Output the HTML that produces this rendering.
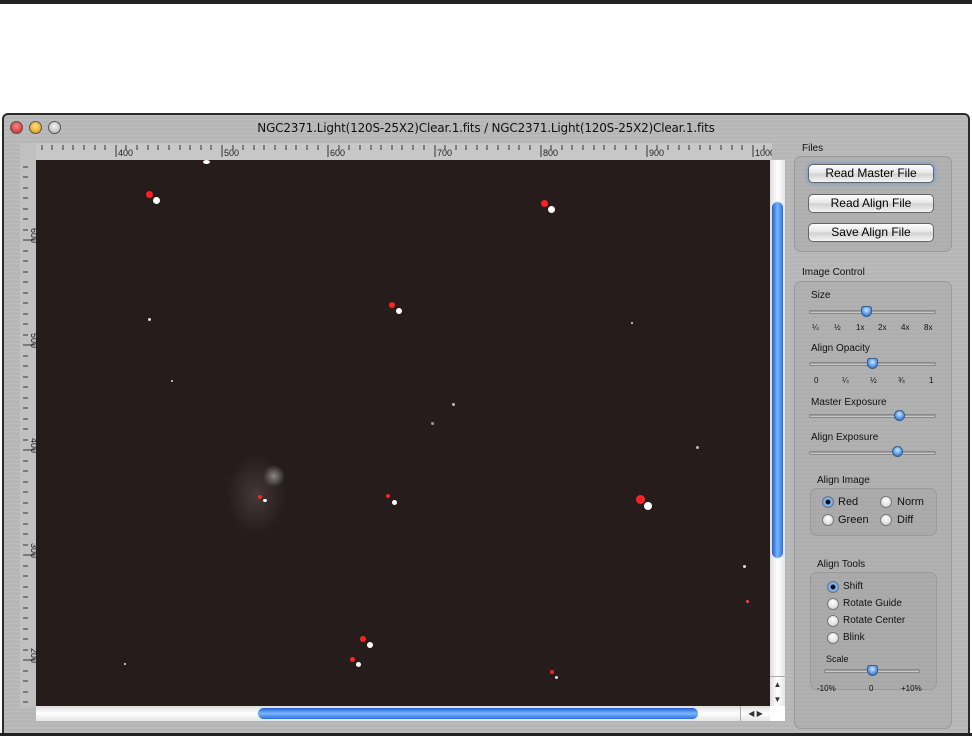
<!DOCTYPE html>
<html><head><meta charset="utf-8"><style>
*{margin:0;padding:0;box-sizing:border-box}
body{width:972px;height:736px;background:#fff;position:relative;overflow:hidden;font-family:"Liberation Sans","DejaVu Sans",sans-serif}
.abs{position:absolute}
#top{left:0;top:0;width:972px;height:4px;background:#222}
#win{left:2px;top:113px;width:968px;height:621px;border:2px solid #2a2a2a;border-bottom:none;border-radius:6px 6px 0 0;
background:repeating-linear-gradient(180deg,#c4c4c4 0,#b4b4b4 1px,#bebebe 2px,#acacac 3px,#c0c0c0 4px);overflow:hidden}
#bot{left:0;top:733px;width:972px;height:3px;background:#222}
.light{width:13px;height:13px;border-radius:50%;top:6px;border:1px solid #555}
#title{left:0;width:964px;top:6px;text-align:center;font-size:12px;color:#111;font-family:"DejaVu Sans",sans-serif;letter-spacing:-0.2px}
#img{left:32px;top:45px;width:734px;height:546px;background:#261c1c;overflow:hidden}
.s{position:absolute;border-radius:50%}
#vs{left:766px;top:45px;width:15px;height:546px;background:linear-gradient(90deg,#ddd,#fff,#e4e4e4)}
#vthumb{left:2px;top:42px;width:11px;height:356px;border-radius:6px;background:linear-gradient(90deg,#1f5fd0,#79b7ff 50%,#2a6ee0)}
#hs{left:32px;top:591px;width:734px;height:15px;background:linear-gradient(#ddd,#fff,#e4e4e4)}
#hthumb{left:222px;top:2px;width:440px;height:11px;border-radius:6px;background:linear-gradient(#1f5fd0,#79b7ff 50%,#2a6ee0)}
.grp{border:1px solid #9a9a9a;border-radius:7px;background:rgba(160,160,160,.35)}
.lbl{font-size:10px;color:#111}
.btn{left:808px;width:126px;height:19px;border:1px solid #666;border-radius:5px;background:linear-gradient(#fdfdfd,#e4e4e4 50%,#d0d0d0 51%,#f4f4f4);font-size:12px;text-align:center;line-height:17px;color:#000}
.track{height:4px;border-radius:2px;background:linear-gradient(#888,#ddd);border:1px solid #888}
.knob{width:11px;height:11px;border-radius:50%;background:radial-gradient(circle at 50% 35%,#cfe6ff,#3c86e0 70%);border:1px solid #3a5a8a}
.tick{font-size:8px;color:#111;position:absolute}
.radio{width:12px;height:12px;border-radius:50%;border:1px solid #777;background:radial-gradient(circle at 50% 35%,#fff,#ccc)}
.radio.on{background:radial-gradient(circle,#111 0 2px,#8fc3ff 3px,#2e75d8)}
.rt{font-size:11px;color:#111}
</style></head><body>
<div id="top" class="abs"></div>
<div id="win" class="abs">
 <div class="abs light" style="left:6px;background:radial-gradient(circle at 50% 40%,#ff8a8a,#c81818)"></div>
 <div class="abs light" style="left:25px;background:radial-gradient(circle at 50% 40%,#ffe680,#e08a00)"></div>
 <div class="abs light" style="left:44px;background:radial-gradient(circle at 50% 40%,#f4f4f4,#aaa)"></div>
 <div id="title" class="abs">NGC2371.Light(120S-25X2)Clear.1.fits / NGC2371.Light(120S-25X2)Clear.1.fits</div>
 <svg class="abs" style="left:16px;top:28px" width="752" height="564">
  <rect x="0" y="0" width="752" height="17" fill="#c8c8c8"/>
  <rect x="0" y="0" width="16" height="564" fill="#c0c0c0"/>
  <g stroke="#333">
   <path d="M22 2v5M32 2v5M43 2v5M53 2v5M64 2v5M75 2v5M85 2v5M96 2v12M106 2v5M117 2v5M128 2v5M138 2v5M149 2v5M160 2v5M170 2v5M181 2v5M191 2v5M202 2v12M213 2v5M223 2v5M234 2v5M244 2v5M255 2v5M266 2v5M276 2v5M287 2v5M298 2v5M308 2v12M319 2v5M329 2v5M340 2v5M351 2v5M361 2v5M372 2v5M382 2v5M393 2v5M404 2v5M415 2v12M425 2v5M436 2v5M446 2v5M457 2v5M467 2v5M478 2v5M489 2v5M499 2v5M510 2v5M521 2v12M531 2v5M542 2v5M552 2v5M563 2v5M574 2v5M584 2v5M595 2v5M606 2v5M616 2v5M627 2v12M637 2v5M648 2v5M659 2v5M669 2v5M680 2v5M690 2v5M701 2v5M712 2v5M722 2v5M733 2v12M744 2v5"/>
  </g>
  <g font-size="9" fill="#222">
   <text x="98" y="13">400</text><text x="204" y="13">500</text><text x="310" y="13">600</text><text x="417" y="13">700</text><text x="523" y="13">800</text><text x="629" y="13">900</text><text x="735" y="13">1000</text>
  </g>
  <g stroke="#333">
   <path d="M3 24h5M3 34h5M3 45h5M3 55h5M3 66h5M3 76h5M3 87h5M3 97h12M3 108h5M3 118h5M3 129h5M3 139h5M3 150h5M3 160h5M3 171h5M3 181h5M3 192h5M3 202h12M3 213h5M3 223h5M3 234h5M3 244h5M3 255h5M3 265h5M3 276h5M3 286h5M3 297h5M3 307h12M3 318h5M3 328h5M3 339h5M3 349h5M3 360h5M3 370h5M3 381h5M3 391h5M3 402h5M3 412h12M3 423h5M3 433h5M3 444h5M3 454h5M3 465h5M3 475h5M3 486h5M3 496h5M3 507h5M3 517h12M3 528h5M3 538h5M3 549h5M3 559h5"/>
  </g>
  <g font-size="9" fill="#222">
   <text transform="translate(11,85) rotate(90)">600</text>
   <text transform="translate(11,190) rotate(90)">500</text>
   <text transform="translate(11,295) rotate(90)">400</text>
   <text transform="translate(11,400) rotate(90)">300</text>
   <text transform="translate(11,505) rotate(90)">200</text>
  </g>
 </svg>
 <div id="img" class="abs">
  <div class="s" style="left:110px;top:31px;width:7px;height:7px;background:#f22"></div>
  <div class="s" style="left:117px;top:37px;width:7px;height:7px;background:#fff"></div>
  <div class="s" style="left:167px;top:0;width:7px;height:4px;background:#fff"></div>
  <div class="s" style="left:505px;top:40px;width:7px;height:7px;background:#f22"></div>
  <div class="s" style="left:512px;top:46px;width:7px;height:7px;background:#fff"></div>
  <div class="s" style="left:353px;top:142px;width:6px;height:6px;background:#f22"></div>
  <div class="s" style="left:360px;top:148px;width:6px;height:6px;background:#fff"></div>
  <div class="s" style="left:112px;top:158px;width:3px;height:3px;background:#ddd"></div>
  <div class="s" style="left:600px;top:335px;width:9px;height:9px;background:#f22"></div>
  <div class="s" style="left:608px;top:342px;width:8px;height:8px;background:#fff"></div>
  <div class="s" style="left:350px;top:334px;width:4px;height:4px;background:#f22"></div>
  <div class="s" style="left:356px;top:340px;width:5px;height:5px;background:#fff"></div>
  <div class="s" style="left:190px;top:295px;width:60px;height:80px;background:radial-gradient(ellipse,rgba(120,110,110,.35),rgba(80,60,60,0) 70%)"></div>
  <div class="s" style="left:227px;top:305px;width:22px;height:22px;background:radial-gradient(circle,rgba(200,200,200,.6),rgba(150,80,80,0) 70%)"></div>
  <div class="s" style="left:222px;top:335px;width:4px;height:4px;background:#f22"></div>
  <div class="s" style="left:227px;top:339px;width:4px;height:3px;background:#fff"></div>
  <div class="s" style="left:324px;top:476px;width:6px;height:6px;background:#f22"></div>
  <div class="s" style="left:331px;top:482px;width:6px;height:6px;background:#fff"></div>
  <div class="s" style="left:314px;top:497px;width:5px;height:5px;background:#f22"></div>
  <div class="s" style="left:320px;top:502px;width:5px;height:5px;background:#fff"></div>
  <div class="s" style="left:514px;top:510px;width:4px;height:4px;background:#f22"></div>
  <div class="s" style="left:519px;top:516px;width:3px;height:3px;background:#ddd"></div>
  <div class="s" style="left:416px;top:243px;width:3px;height:3px;background:#bbb"></div>
  <div class="s" style="left:395px;top:262px;width:3px;height:3px;background:#999"></div>
  <div class="s" style="left:660px;top:286px;width:3px;height:3px;background:#bbb"></div>
  <div class="s" style="left:707px;top:405px;width:3px;height:3px;background:#ddd"></div>
  <div class="s" style="left:135px;top:220px;width:2px;height:2px;background:#ddd"></div>
  <div class="s" style="left:595px;top:162px;width:2px;height:2px;background:#ddd"></div>
  <div class="s" style="left:710px;top:440px;width:3px;height:3px;background:#f44"></div>
  <div class="s" style="left:88px;top:503px;width:2px;height:2px;background:#ddd"></div>
 </div>
 <div id="vs" class="abs"><div id="vthumb" class="abs"></div>
  <div class="abs" style="left:0;top:516px;width:15px;height:30px;font-size:8px;text-align:center;line-height:15px;color:#333;border-top:1px solid #aaa">▲<br>▼</div></div>
 <div id="hs" class="abs"><div id="hthumb" class="abs"></div>
  <div class="abs" style="left:704px;top:0;width:30px;height:15px;font-size:8px;line-height:15px;color:#333;border-left:1px solid #aaa;text-align:center">◀ ▶</div></div>
 <div class="abs" style="left:766px;top:591px;width:15px;height:15px;background:#fff"></div>
</div>
<div id="bot" class="abs"></div>

<div class="abs lbl" style="left:802px;top:143px">Files</div>
<div class="abs grp" style="left:794px;top:156px;width:158px;height:96px"></div>
<div class="abs btn" style="top:164px;box-shadow:0 0 3px 1px #6fa0e0">Read Master File</div>
<div class="abs btn" style="top:194px">Read Align File</div>
<div class="abs btn" style="top:223px">Save Align File</div>

<div class="abs lbl" style="left:802px;top:267px">Image Control</div>
<div class="abs grp" style="left:794px;top:281px;width:158px;height:448px"></div>
<div class="abs lbl" style="left:811px;top:290px">Size</div>
<div class="abs track" style="left:809px;top:310px;width:127px"></div>
<div class="abs knob" style="left:861px;top:306px;border-radius:3px 3px 6px 6px"></div>
<span class="tick" style="left:812px;top:323px">¼</span><span class="tick" style="left:834px;top:323px">½</span><span class="tick" style="left:856px;top:323px">1x</span><span class="tick" style="left:878px;top:323px">2x</span><span class="tick" style="left:901px;top:323px">4x</span><span class="tick" style="left:924px;top:323px">8x</span>
<div class="abs lbl" style="left:811px;top:343px">Align Opacity</div>
<div class="abs track" style="left:809px;top:362px;width:127px"></div>
<div class="abs knob" style="left:867px;top:358px;border-radius:3px 3px 6px 6px"></div>
<span class="tick" style="left:814px;top:376px">0</span><span class="tick" style="left:842px;top:376px">¼</span><span class="tick" style="left:870px;top:376px">½</span><span class="tick" style="left:898px;top:376px">¾</span><span class="tick" style="left:929px;top:376px">1</span>
<div class="abs lbl" style="left:811px;top:397px">Master Exposure</div>
<div class="abs track" style="left:809px;top:414px;width:127px"></div>
<div class="abs knob" style="left:894px;top:410px"></div>
<div class="abs lbl" style="left:811px;top:432px">Align Exposure</div>
<div class="abs track" style="left:809px;top:451px;width:127px"></div>
<div class="abs knob" style="left:892px;top:446px"></div>

<div class="abs lbl" style="left:817px;top:475px">Align Image</div>
<div class="abs grp" style="left:810px;top:488px;width:127px;height:48px"></div>
<div class="abs radio on" style="left:822px;top:496px"></div><div class="abs rt" style="left:838px;top:496px">Red</div>
<div class="abs radio" style="left:880px;top:496px"></div><div class="abs rt" style="left:897px;top:496px">Norm</div>
<div class="abs radio" style="left:822px;top:514px"></div><div class="abs rt" style="left:838px;top:514px">Green</div>
<div class="abs radio" style="left:880px;top:514px"></div><div class="abs rt" style="left:897px;top:514px">Diff</div>

<div class="abs lbl" style="left:817px;top:559px">Align Tools</div>
<div class="abs grp" style="left:810px;top:572px;width:127px;height:118px"></div>
<div class="abs radio on" style="left:827px;top:581px"></div><div class="abs rt" style="left:843px;top:581px;font-size:10px">Shift</div>
<div class="abs radio" style="left:827px;top:598px"></div><div class="abs rt" style="left:843px;top:598px;font-size:10px">Rotate Guide</div>
<div class="abs radio" style="left:827px;top:615px"></div><div class="abs rt" style="left:843px;top:615px;font-size:10px">Rotate Center</div>
<div class="abs radio" style="left:827px;top:632px"></div><div class="abs rt" style="left:843px;top:632px;font-size:10px">Blink</div>
<div class="abs lbl" style="left:826px;top:654px;font-size:9px">Scale</div>
<div class="abs track" style="left:824px;top:669px;width:96px"></div>
<div class="abs knob" style="left:867px;top:665px;border-radius:3px 3px 6px 6px"></div>
<span class="tick" style="left:817px;top:684px">-10%</span><span class="tick" style="left:869px;top:684px">0</span><span class="tick" style="left:901px;top:684px">+10%</span>
</body></html>
